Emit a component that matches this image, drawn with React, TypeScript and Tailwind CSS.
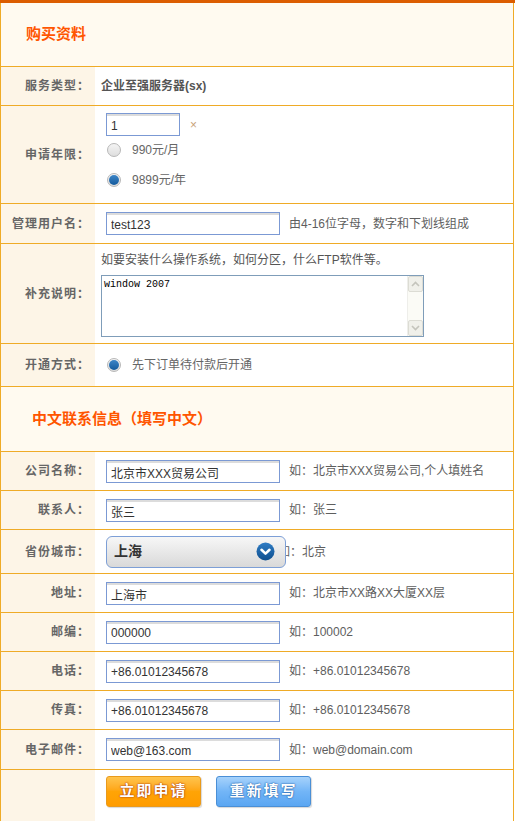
import React from 'react';

const FONT = { fontFamily: '"Liberation Sans", "Noto Sans CJK SC", sans-serif' };

function Label({ text }: { text: string }) {
  return (
    <div className="w-[94px] shrink-0 bg-[#fdf5e7] flex items-center justify-end pr-[5px] text-[12px] font-bold text-[#666] tracking-[1px]">
      {text}
    </div>
  );
}

function Row({ label, h, pad = 'pl-[11px]', children }: { label: string; h: string; pad?: string; children: React.ReactNode }) {
  return (
    <div className={`flex border-b border-[#efab27] ${h}`}>
      <Label text={label} />
      <div className={`flex-1 flex items-center ${pad}`}>{children}</div>
    </div>
  );
}

function Field({ value, w = 'w-[174px]' }: { value: string; w?: string }) {
  return (
    <input
      readOnly
      defaultValue={value}
      className={`${w} h-[23px] border border-[#7b99d4] shadow-[inset_0_2px_0_#dcdcdc] bg-white px-[4px] pt-[2px] text-[12px] text-[#333] outline-none`}
      style={FONT}
    />
  );
}

function Hint({ children }: { children: React.ReactNode }) {
  return <span className="ml-[9px] text-[12px] text-[#5e5e5e] whitespace-nowrap">{children}</span>;
}

function Radio({ checked }: { checked?: boolean }) {
  return (
    <span className="w-[14px] h-[14px] rounded-full border border-[#b8b8b8] bg-gradient-to-b from-[#f4f4f4] to-[#dedede] flex items-center justify-center shrink-0">
      {checked && <span className="w-[10px] h-[10px] rounded-full bg-gradient-to-b from-[#3d86c8] to-[#135a9c]" />}
    </span>
  );
}

function Header({ text, h, pl }: { text: string; h: string; pl: string }) {
  return (
    <div className={`flex items-center bg-[#fffaf0] border-b border-[#efab27] ${h} ${pl}`}>
      <span className="text-[15px] font-bold text-[#ff5500]">{text}</span>
    </div>
  );
}

export default function App() {
  return (
    <div className="w-[515px] h-[821px] overflow-hidden bg-white" style={FONT}>
      <div className="h-[3px] bg-[#dc5d00]" />
      <div className="w-[514px] border-l border-r border-[#efab27]">
        <Header text="购买资料" h="h-[64px]" pl="pl-[25px]" />

        <Row label="服务类型：" h="h-[39px]" pad="pl-[6px]">
          <span className="text-[12px] font-bold text-[#555]">企业至强服务器(sx)</span>
        </Row>

        <Row label="申请年限：" h="h-[98px]">
          <div className="flex flex-col self-start pt-[7px]">
            <div className="flex items-center">
              <Field value="1" w="w-[74px]" />
              <span className="ml-[10px] text-[12px] text-[#c9a27a]">×</span>
            </div>
            <div className="flex items-center h-[16px] gap-[11px] mt-[6px] pl-[1px]">
              <Radio />
              <span className="text-[12px] text-[#666]">990元/月</span>
            </div>
            <div className="flex items-center h-[16px] gap-[11px] mt-[14px] pl-[1px]">
              <Radio checked />
              <span className="text-[12px] text-[#666]">9899元/年</span>
            </div>
          </div>
        </Row>

        <Row label="管理用户名：" h="h-[40px]">
          <Field value="test123" />
          <Hint>由4-16位字母，数字和下划线组成</Hint>
        </Row>

        <Row label="补充说明：" h="h-[100px]" pad="pl-[6px]">
          <div className="flex flex-col self-start pt-[9px]">
            <span className="text-[12px] leading-[14px] text-[#555]">如要安装什么操作系统，如何分区，什么FTP软件等。</span>
            <div className="mt-[8px] w-[323px] h-[62px] border border-[#7f9db9] flex bg-white">
              <div className="flex-1 px-[2px] pt-[2px] text-[10px] leading-[13px] text-black" style={{ fontFamily: '"Liberation Mono", monospace' }}>
                window 2007
              </div>
              <div className="w-[16px] flex flex-col justify-between bg-[#fbfbf6] border-l border-[#eeeeea]">
                <div className="h-[16px] rounded-[2px] border border-[#dcdcd4] bg-[#f0f0ea] flex items-center justify-center">
                  <svg width="9" height="6" viewBox="0 0 9 6"><path d="M1 5 L4.5 1.5 L8 5" stroke="#c4c4bc" strokeWidth="1.6" fill="none" /></svg>
                </div>
                <div className="h-[16px] rounded-[2px] border border-[#dcdcd4] bg-[#f0f0ea] flex items-center justify-center">
                  <svg width="9" height="6" viewBox="0 0 9 6"><path d="M1 1 L4.5 4.5 L8 1" stroke="#c4c4bc" strokeWidth="1.6" fill="none" /></svg>
                </div>
              </div>
            </div>
          </div>
        </Row>

        <Row label="开通方式：" h="h-[43px]">
          <div className="flex items-center gap-[11px] pl-[1px]">
            <Radio checked />
            <span className="text-[12px] text-[#666]">先下订单待付款后开通</span>
          </div>
        </Row>

        <Header text="中文联系信息（填写中文）" h="h-[65px]" pl="pl-[31px]" />

        <Row label="公司名称：" h="h-[39px]">
          <Field value="北京市XXX贸易公司" />
          <Hint>如：北京市XXX贸易公司,个人填姓名</Hint>
        </Row>

        <Row label="联系人：" h="h-[39px]">
          <Field value="张三" />
          <Hint>如：张三</Hint>
        </Row>

        <Row label="省份城市：" h="h-[44px]">
          <div className="relative z-10 w-[180px] h-[32px] -mr-[7px] rounded-[6px] border border-[#7d9fd6] bg-gradient-to-b from-[#f7f7f7] to-[#d9d9d9] flex items-center justify-between pl-[7px] pr-[10px] shrink-0">
            <span className="text-[14px] font-bold text-[#333]">上海</span>
            <svg width="19" height="19" viewBox="0 0 19 19">
              <defs>
                <linearGradient id="sg" x1="0" y1="0" x2="0" y2="1">
                  <stop offset="0" stopColor="#2f7cc4" />
                  <stop offset="1" stopColor="#0f4f8e" />
                </linearGradient>
              </defs>
              <circle cx="9.5" cy="9.5" r="9" fill="url(#sg)" />
              <path d="M5.5 7.8 L9.5 11.6 L13.5 7.8" stroke="#fff" strokeWidth="2.6" fill="none" strokeLinecap="round" strokeLinejoin="round" />
            </svg>
          </div>
          <span className="-ml-[1px] text-[12px] text-[#5e5e5e] whitespace-nowrap">如：北京</span>
        </Row>

        <Row label="地址：" h="h-[39px]">
          <Field value="上海市" />
          <Hint>如：北京市XX路XX大厦XX层</Hint>
        </Row>

        <Row label="邮编：" h="h-[39px]">
          <Field value="000000" />
          <Hint>如：100002</Hint>
        </Row>

        <Row label="电话：" h="h-[39px]">
          <Field value="+86.01012345678" />
          <Hint>如：+86.01012345678</Hint>
        </Row>

        <Row label="传真：" h="h-[39px]">
          <Field value="+86.01012345678" />
          <Hint>如：+86.01012345678</Hint>
        </Row>

        <Row label="电子邮件：" h="h-[40px]">
          <Field value="web@163.com" />
          <Hint>如：web@domain.com</Hint>
        </Row>

        <div className="flex h-[60px]">
          <div className="w-[94px] shrink-0 bg-[#fdf5e7]" />
          <div className="flex-1 flex items-start pl-[11px] pt-[6px] gap-[15px]">
            <button className="w-[95px] h-[31px] rounded-[3px] border border-[#e99a1c] bg-gradient-to-b from-[#ffc44a] via-[#ffa406] to-[#ff9c00] text-white font-bold text-[15px] tracking-[2px] [text-shadow:0_0_2px_#a8340a,0_0_1px_#a8340a] shadow-[1px_1px_1px_#d8d8d8]">
              立即申请
            </button>
            <button className="w-[95px] h-[31px] rounded-[3px] border border-[#4a8fd6] bg-gradient-to-b from-[#a6d2fb] via-[#72b5f7] to-[#5aa6f2] text-white font-bold text-[15px] tracking-[2px] [text-shadow:0_0_2px_#1f5fa8,0_0_1px_#1f5fa8] shadow-[1px_1px_1px_#d8d8d8]">
              重新填写
            </button>
          </div>
        </div>
      </div>
    </div>
  );
}
